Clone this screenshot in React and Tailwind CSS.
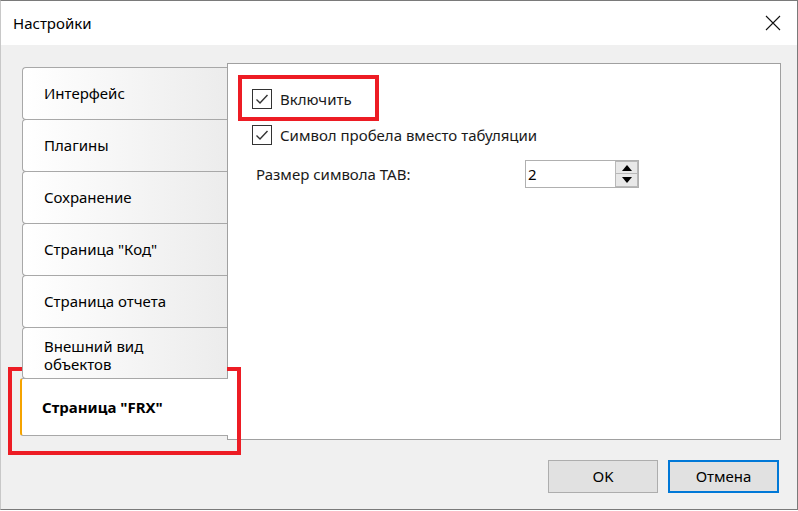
import React, { useState } from 'react';

const tabs = ['Интерфейс', 'Плагины', 'Сохранение', 'Страница "Код"', 'Страница отчета'];

function CheckBox({ checked, label, onChange }) {
    return (
        <label className="flex items-center h-[20px] cursor-default select-none" onClick={onChange}>
            <span className="w-[20px] h-[20px] border border-[#333333] bg-white flex items-center justify-center">
                {checked && (
                    <svg width="14" height="12" viewBox="0 0 14 12">
                        <path d="M1.5 6.5 L5 10 L12.5 2" fill="none" stroke="#333333" strokeWidth="1.4" />
                    </svg>
                )}
            </span>
            <span className="ml-[8px] text-[15px] text-[#1a1a1a] leading-none">{label}</span>
        </label>
    );
}

export default function App() {
    const [enabled, setEnabled] = useState(true);
    const [spaces, setSpaces] = useState(true);

    return (
        <div className="w-[798px] h-[511px] relative overflow-hidden bg-white" style={{ fontFamily: '"Noto Sans", "Open Sans", sans-serif' }}>
            <div className="w-[798px] h-[510px] flex flex-col border border-[#7a7a7a] border-l-[#c8c8c8]">
                {/* title bar */}
                <div className="h-[44px] bg-white flex items-center justify-between pl-[12px] pr-[16px]">
                    <span className="text-[15px] text-black">Настройки</span>
                    <svg width="16" height="16" viewBox="0 0 16 16">
                        <path d="M1 1 L15 15 M15 1 L1 15" stroke="#111" strokeWidth="1.1" fill="none" />
                    </svg>
                </div>

                {/* body */}
                <div className="flex-1 bg-[#f0f0f0] flex flex-col pl-[19px] pt-[18px]">
                    <div className="flex">
                        {/* tabs */}
                        <div className="w-[208px] flex flex-col pt-[4px] -mr-px z-10">
                            {tabs.map((t, i) => (
                                <div key={i} className="ml-[2px] w-[205px] h-[53px] -mb-px border border-r-0 border-[#a8a8a8] rounded-l-[4px] bg-linear-to-r from-white to-[#ececec] flex items-center pl-[21px] text-[15px] text-black">
                                    {t}
                                </div>
                            ))}
                            <div className="ml-[2px] w-[205px] h-[52px] border border-r-0 border-[#a8a8a8] rounded-l-[4px] bg-linear-to-r from-white to-[#ececec] pl-[21px] pt-[9px] text-[15px] leading-[18px] text-black overflow-hidden">
                                Внешний вид<br />объектов
                            </div>
                            <div className="w-[208px] h-[58px] -mt-px border-y border-[#a8a8a8] border-l-[2px] border-l-[#f5a300] rounded-l-[3px] bg-white flex items-center pl-[20px] text-[15px] font-bold text-black">
                                Страница "FRX"
                            </div>
                        </div>

                        {/* content panel */}
                        <div className="w-[554px] h-[377px] bg-white border border-[#a0a0a0] flex flex-col pl-[24px] pt-[25px]">
                            <CheckBox checked={enabled} label="Включить" onChange={() => setEnabled(!enabled)} />
                            <div className="h-[16px]" />
                            <CheckBox checked={spaces} label="Символ пробела вместо табуляции" onChange={() => setSpaces(!spaces)} />
                            <div className="flex items-center mt-[15px] pl-[4px]">
                                <span className="w-[269px] text-[15px] text-[#1a1a1a]">Размер символа TAB:</span>
                                <div className="w-[114px] h-[28px] border border-[#b0b0b0] flex items-center pl-[2px]">
                                    <span className="flex-1 text-[15px] text-black">2</span>
                                    <div className="w-[23px] h-[26px] flex flex-col">
                                        <div className="h-[13px] border border-[#b8b8b8] bg-[#e8e8e8] flex items-center justify-center">
                                            <svg width="10" height="6" viewBox="0 0 10 6"><path d="M5 0 L10 6 L0 6 Z" fill="#000" /></svg>
                                        </div>
                                        <div className="h-[13px] border border-t-0 border-[#b8b8b8] bg-[#e8e8e8] flex items-center justify-center">
                                            <svg width="10" height="6" viewBox="0 0 10 6"><path d="M0 0 L10 0 L5 6 Z" fill="#000" /></svg>
                                        </div>
                                    </div>
                                </div>
                            </div>
                        </div>
                    </div>

                    {/* buttons */}
                    <div className="flex justify-end gap-[10px] pr-[18px] mt-[20px]">
                        <button className="w-[110px] h-[33px] bg-[#e1e1e1] border border-[#adadad] text-[15px] text-black">OK</button>
                        <button className="w-[111px] h-[33px] bg-[#e1e1e1] border-2 border-[#0078d7] text-[15px] text-black">Отмена</button>
                    </div>
                </div>
            </div>

            {/* red annotation boxes */}
            <div className="absolute left-[238px] top-[75px] w-[141px] h-[46px] border-[4px] border-[#ed1c24] pointer-events-none" />
            <div className="absolute left-[8px] top-[367px] w-[233px] h-[88px] border-[4px] border-[#ed1c24] pointer-events-none" />
        </div>
    );
}
